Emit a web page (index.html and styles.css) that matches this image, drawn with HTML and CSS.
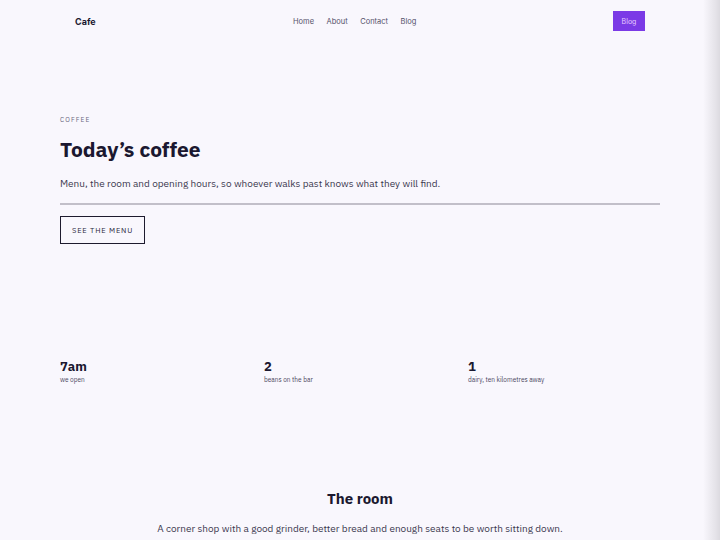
FILE: index.html
```html
<!DOCTYPE html>
<html lang="en">
<head>
<meta charset="utf-8">
<title>Cafe</title>
<link rel="stylesheet" href="styles.css">
</head>
<body>
<header class="nav">
  <div class="brand">Cafe</div>
  <nav class="links">
    <a href="#">Home</a>
    <a href="#">About</a>
    <a href="#">Contact</a>
    <a href="#">Blog</a>
  </nav>
  <a class="cta" href="#">Blog</a>
</header>
<main class="wrap">
  <section class="hero">
    <div class="eyebrow">COFFEE</div>
    <h1>Today’s coffee</h1>
    <p class="lead">Menu, the room and opening hours, so whoever walks past knows what they will find.</p>
    <hr class="rule">
    <a class="btn" href="#">SEE THE MENU</a>
  </section>
  <section class="stats">
    <div class="stat"><div class="num">7am</div><div class="lbl">we open</div></div>
    <div class="stat"><div class="num">2</div><div class="lbl">beans on the bar</div></div>
    <div class="stat"><div class="num">1</div><div class="lbl">dairy, ten kilometres away</div></div>
  </section>
  <section class="room">
    <h2>The room</h2>
    <p>A corner shop with a good grinder, better bread and enough seats to be worth sitting down.</p>
  </section>
</main>
</body>
</html>
```
FILE: styles.css
```css
html {
  background: linear-gradient(to right, #f9f7fd 0, #f9f7fd 703px, #e4e2e8 716px, #dcdae0 720px);
  min-height: 100%;
}
body {
  margin: 0;
  font-family: "IBM Plex Sans", "Noto Sans", sans-serif;
  color: #1b1830;
}
.nav {
  display: flex;
  align-items: center;
  height: 42px;
  padding: 0 75px 0 75px;
}
.brand {
  font-family: Inter, sans-serif;
  font-weight: 700;
  font-size: 9px;
  color: #1b1830;
  width: 218px;
}
.links {
  display: flex;
  gap: 12.5px;
  flex: 1;
}
.links a {
  font-family: Inter, sans-serif;
  font-size: 7.5px;
  color: #55526a;
  text-decoration: none;
}
.cta {
  display: flex;
  align-items: center;
  justify-content: center;
  width: 32px;
  height: 20px;
  background: #7b3ae6;
  color: #e6ccff;
  font-family: Inter, sans-serif;
  font-size: 7px;
  text-decoration: none;
}
.wrap {
  padding: 0 60px;
}
.hero {
  padding-top: 74px;
}
.eyebrow {
  font-size: 6.5px;
  letter-spacing: 1.2px;
  color: #6b6880;
  line-height: 8px;
}
h1 {
  margin: 11px 0 0;
  font-size: 21px;
  line-height: 28px;
  font-weight: 700;
  color: #1b1830;
}
.lead {
  margin: 14px 0 0;
  font-size: 10px;
  line-height: 14px;
  color: #3b374f;
}
.rule {
  margin: 12px 0 0;
  border: 0;
  height: 2px;
  background: #c2bfc9;
}
.btn {
  display: inline-block;
  margin-top: 11px;
  border: 1px solid #1e1b2e;
  padding: 0 11px;
  height: 26px;
  line-height: 26px;
  font-size: 7.5px;
  letter-spacing: 0.8px;
  color: #2a2640;
  text-decoration: none;
}
.stats {
  display: grid;
  grid-template-columns: repeat(3, 1fr);
  gap: 12px;
  margin-top: 115px;
}
.num {
  font-size: 13px;
  line-height: 16px;
  font-weight: 700;
  color: #1b1830;
}
.lbl {
  font-size: 6.5px;
  line-height: 10px;
  color: #4a4660;
}
.room {
  margin-top: 104px;
  text-align: center;
}
h2 {
  margin: 0;
  font-size: 15px;
  line-height: 20px;
  font-weight: 700;
  color: #1b1830;
}
.room p {
  margin: 13px 0 0;
  font-size: 10px;
  line-height: 14px;
  color: #3b374f;
}
```
